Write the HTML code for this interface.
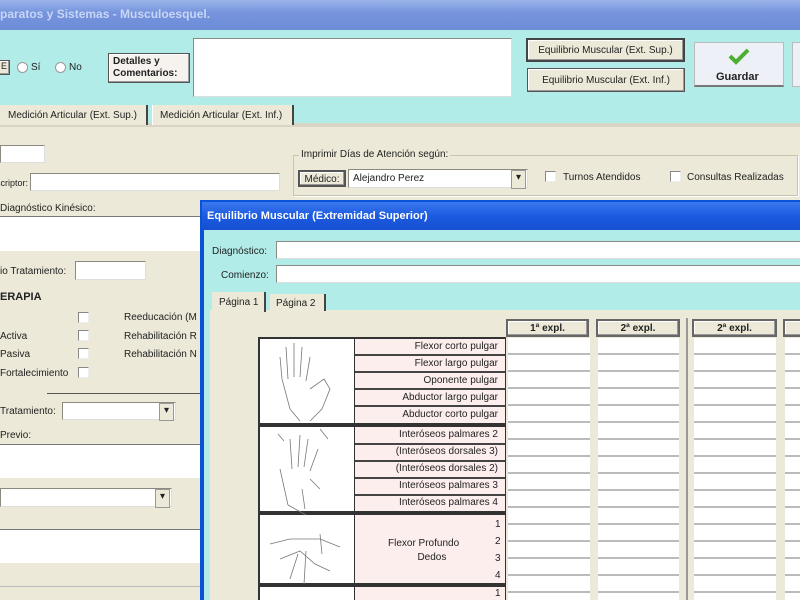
<!DOCTYPE html>
<html><head><meta charset="utf-8"><style>
*{box-sizing:border-box;margin:0;padding:0}
body{width:800px;height:600px;overflow:hidden;position:relative;background:#ece9d8;font-family:"Liberation Sans",sans-serif;font-size:10px;color:#222}
div,span{position:absolute}
.t{white-space:nowrap}
.in{background:#fff;border:1px solid #8a8a80;border-right-color:#ddd;border-bottom-color:#ddd}
.cb{width:11px;height:11px;background:#fff;border:1px solid #888;border-right-color:#eee;border-bottom-color:#eee}
.btn{background:#ece9d8;border:1px solid #555;box-shadow:inset -1px -1px #999,inset 1px 1px #fff;text-align:center}
.sel:after{content:"▾";position:absolute;right:1px;top:0;width:13px;height:100%;background:#ece9d8;border:1px solid #999;font-size:10px;text-align:center;line-height:14px}
</style></head><body>
<div style="left:0;top:0;width:800px;height:30px;background:linear-gradient(#9ab4ea,#7795dd 40%,#6d8cd8)"></div>
<div class="t" style="left:0;top:7px;color:#c8d6f6;font-weight:bold;font-size:12px">paratos y Sistemas - Musculoesquel.</div>
<div style="left:0;top:30px;width:800px;height:95px;background:#b1ece8"></div>
<div style="left:0;top:123px;width:800px;height:4px;background:#d8d5c4"></div>
<div class="btn" style="left:-2px;top:60px;width:12px;height:15px;font-size:9px">E</div>
<div style="left:17px;top:62px;width:11px;height:11px;border-radius:50%;background:#fff;border:1px solid #999"></div>
<div class="t" style="left:31px;top:62px">Sí</div>
<div style="left:55px;top:62px;width:11px;height:11px;border-radius:50%;background:#fff;border:1px solid #999"></div>
<div class="t" style="left:69px;top:62px">No</div>
<div class="btn" style="left:108px;top:53px;width:82px;height:30px;font-weight:bold;text-align:left;padding:2px 4px;line-height:12px;background:#f6f2ee">Detalles y<br>Comentarios:</div>
<div class="in" style="left:193px;top:38px;width:319px;height:59px"></div>
<div class="btn" style="left:526px;top:38px;width:159px;height:24px;line-height:22px;border:2px solid #444">Equilibrio Muscular (Ext. Sup.)</div>
<div class="btn" style="left:527px;top:68px;width:158px;height:24px;line-height:24px">Equilibrio Muscular (Ext. Inf.)</div>
<div style="left:694px;top:42px;width:90px;height:45px;background:#eef0f8;border:1px solid #bbb;border-bottom:2px solid #777"></div>
<svg style="position:absolute;left:728px;top:47px" width="22" height="18"><path d="M2 9 L8 15 L20 3" stroke="#4caf30" stroke-width="4" fill="none"/></svg>
<div class="t" style="left:716px;top:71px;font-weight:bold;font-size:11px">Guardar</div>
<div style="left:792px;top:42px;width:10px;height:45px;background:#eef0f8;border:1px solid #bbb"></div>
<div style="left:0;top:105px;width:148px;height:20px;background:#ece9d8;border-right:2px solid #444"></div>
<div class="t" style="left:8px;top:110px">Medición Articular (Ext. Sup.)</div>
<div style="left:152px;top:105px;width:142px;height:20px;background:#ece9d8;border-left:1px solid #fff;border-right:2px solid #444"></div>
<div class="t" style="left:160px;top:110px">Medición Articular (Ext. Inf.)</div>
<div class="in" style="left:0;top:145px;width:45px;height:18px"></div>
<div class="t" style="left:-4px;top:178px;font-size:9px">scriptor:</div>
<div class="in" style="left:30px;top:173px;width:250px;height:18px"></div>
<div class="t" style="left:0;top:203px">Diagnóstico Kinésico:</div>
<div style="left:0;top:216px;width:210px;height:35px;background:#fff;border-top:1px solid #777"></div>
<div class="t" style="left:0;top:266px">io Tratamiento:</div>
<div class="in" style="left:75px;top:261px;width:71px;height:19px"></div>
<div class="t" style="left:0;top:291px;font-weight:bold;font-size:11px">ERAPIA</div>
<div class="cb" style="left:78px;top:312px"></div>
<div class="cb" style="left:78px;top:330px"></div><div class="t" style="left:0;top:331px">Activa</div>
<div class="cb" style="left:78px;top:348px"></div><div class="t" style="left:0;top:349px">Pasiva</div>
<div class="cb" style="left:78px;top:367px"></div><div class="t" style="left:0;top:368px">Fortalecimiento</div>
<div class="t" style="left:124px;top:312px">Reeducación (M</div>
<div class="t" style="left:124px;top:331px">Rehabilitación R</div>
<div class="t" style="left:124px;top:349px">Rehabilitación N</div>
<div style="left:47px;top:393px;width:160px;height:1px;background:#555"></div>
<div class="t" style="left:0;top:406px">Tratamiento:</div>
<div class="in sel" style="left:62px;top:402px;width:114px;height:18px"></div>
<div class="t" style="left:0;top:430px">Previo:</div>
<div style="left:0;top:444px;width:210px;height:34px;background:#fff;border-top:1px solid #777"></div>
<div class="in sel" style="left:0;top:488px;width:172px;height:19px"></div>
<div style="left:0;top:529px;width:210px;height:34px;background:#fff;border-top:1px solid #777"></div>
<div style="left:0;top:586px;width:210px;height:1px;background:#bbb"></div>
<div style="left:293px;top:155px;width:505px;height:41px;border:1px solid #c8c4b0;box-shadow:1px 1px #fff"></div>
<div class="t" style="left:299px;top:149px;background:#ece9d8;padding:0 2px">Imprimir Días de Atención según:</div>
<div class="btn" style="left:298px;top:170px;width:48px;height:17px;line-height:15px;border:2px solid #555">Médico:</div>
<div class="in sel" style="left:348px;top:169px;width:180px;height:19px;line-height:17px;padding-left:4px">Alejandro Perez</div>
<div class="cb" style="left:545px;top:171px"></div><div class="t" style="left:563px;top:172px">Turnos Atendidos</div>
<div class="cb" style="left:670px;top:171px"></div><div class="t" style="left:687px;top:172px">Consultas Realizadas</div>
<div style="left:200px;top:200px;width:600px;height:400px;background:#0a52d8"></div>
<div style="left:202px;top:202px;width:598px;height:28px;background:linear-gradient(#3a78f0,#1c5ae0 50%,#1550d0)"></div>
<div class="t" style="left:207px;top:210px;color:#fff;font-weight:bold;font-size:11px">Equilibrio Muscular (Extremidad Superior)</div>
<div style="left:204px;top:230px;width:596px;height:370px;background:#b1ece8"></div>
<div class="t" style="left:212px;top:246px">Diagnóstico:</div>
<div class="in" style="left:276px;top:241px;width:530px;height:18px"></div>
<div class="t" style="left:221px;top:270px">Comienzo:</div>
<div class="in" style="left:276px;top:265px;width:530px;height:18px"></div>
<div style="left:210px;top:310px;width:590px;height:290px;background:#ece9d8"></div>
<div style="left:212px;top:292px;width:54px;height:20px;background:#ece9d8;border-right:2px solid #444"></div>
<div class="t" style="left:219px;top:297px">Página 1</div>
<div style="left:270px;top:294px;width:56px;height:17px;background:#ece9d8;border-right:2px solid #444"></div>
<div class="t" style="left:276px;top:298px">Página 2</div>
<div class="btn" style="left:506px;top:319px;width:83px;height:18px;font-weight:bold;line-height:16px;border:2px solid #666">1ª expl.</div>
<div class="btn" style="left:596px;top:319px;width:84px;height:18px;font-weight:bold;line-height:16px;border:2px solid #666">2ª expl.</div>
<div class="btn" style="left:692px;top:319px;width:85px;height:18px;font-weight:bold;line-height:16px;border:2px solid #666">2ª expl.</div>
<div class="btn" style="left:783px;top:319px;width:30px;height:18px;border:2px solid #666"></div>
<div style="left:686px;top:318px;width:2px;height:282px;background:#999"></div>
<div style="left:258px;top:337px;width:248px;height:263px;background:#333"></div>
<div style="left:260px;top:339px;width:94px;height:84px;background:#fff"></div>
<div style="left:260px;top:427px;width:94px;height:84px;background:#fff"></div>
<div style="left:260px;top:515px;width:94px;height:68px;background:#fff"></div>
<div style="left:260px;top:587px;width:94px;height:13px;background:#fff"></div>
<svg style="position:absolute;left:260px;top:339px" width="94" height="260" fill="none" stroke="#777" stroke-width="0.8">
<path d="M30 70 L22 40 L20 18 M28 40 L26 8 M34 38 L34 4 M40 38 L42 8 M46 42 L50 18 M50 50 L64 40 L70 50 L62 70 L50 82 M30 70 L40 82"/>
<path d="M28 166 L20 130 M32 130 L30 100 M38 128 L40 96 M44 128 L48 100 M50 132 L58 110 M28 166 L46 176 M50 140 L60 150 M18 95 L24 102 M60 90 L68 100 M42 150 L45 170"/>
<path d="M10 205 L30 200 L60 200 L80 208 M20 220 L40 212 L55 225 L70 232 M30 240 L38 215 M44 245 L46 212 M60 195 L62 215"/>
</svg>
<div style="left:355px;top:339px;width:150px;height:84px;background:#fdeeee"></div>
<div style="left:355px;top:427px;width:150px;height:84px;background:#fdeeee"></div>
<div style="left:355px;top:515px;width:150px;height:68px;background:#fdeeee"></div>
<div style="left:355px;top:587px;width:150px;height:13px;background:#fdeeee"></div>
<div class="t" style="right:302px;top:341px">Flexor corto pulgar</div>
<div class="t" style="right:302px;top:358px">Flexor largo pulgar</div>
<div class="t" style="right:302px;top:375px">Oponente pulgar</div>
<div class="t" style="right:302px;top:392px">Abductor largo pulgar</div>
<div class="t" style="right:302px;top:409px">Abductor corto pulgar</div>
<div class="t" style="right:302px;top:429px">Interóseos palmares 2</div>
<div class="t" style="right:302px;top:446px">(Interóseos dorsales 3)</div>
<div class="t" style="right:302px;top:463px">(Interóseos dorsales 2)</div>
<div class="t" style="right:302px;top:480px">Interóseos palmares 3</div>
<div class="t" style="right:302px;top:497px">Interóseos palmares 4</div>
<div class="t" style="left:388px;top:537px;text-align:center;line-height:14px">Flexor Profundo<br>&nbsp;&nbsp;&nbsp;&nbsp;&nbsp;&nbsp;Dedos</div>
<div class="t" style="left:495px;top:516px;line-height:17px">1<br>2<br>3<br>4</div>
<div class="t" style="left:495px;top:588px">1</div>
<div style="left:355px;top:354px;width:150px;height:2px;background:#444"></div>
<div style="left:355px;top:371px;width:150px;height:2px;background:#444"></div>
<div style="left:355px;top:388px;width:150px;height:2px;background:#444"></div>
<div style="left:355px;top:405px;width:150px;height:2px;background:#444"></div>
<div style="left:355px;top:443px;width:150px;height:2px;background:#444"></div>
<div style="left:355px;top:460px;width:150px;height:2px;background:#444"></div>
<div style="left:355px;top:477px;width:150px;height:2px;background:#444"></div>
<div style="left:355px;top:494px;width:150px;height:2px;background:#444"></div>
<div style="left:508px;top:338px;width:82px;height:262px;background:repeating-linear-gradient(#fff 0 15px,#bbb 15px 17px)"></div>
<div style="left:598px;top:338px;width:81px;height:262px;background:repeating-linear-gradient(#fff 0 15px,#bbb 15px 17px)"></div>
<div style="left:694px;top:338px;width:82px;height:262px;background:repeating-linear-gradient(#fff 0 15px,#bbb 15px 17px)"></div>
<div style="left:785px;top:338px;width:15px;height:262px;background:repeating-linear-gradient(#fff 0 15px,#bbb 15px 17px)"></div>
</body></html>
